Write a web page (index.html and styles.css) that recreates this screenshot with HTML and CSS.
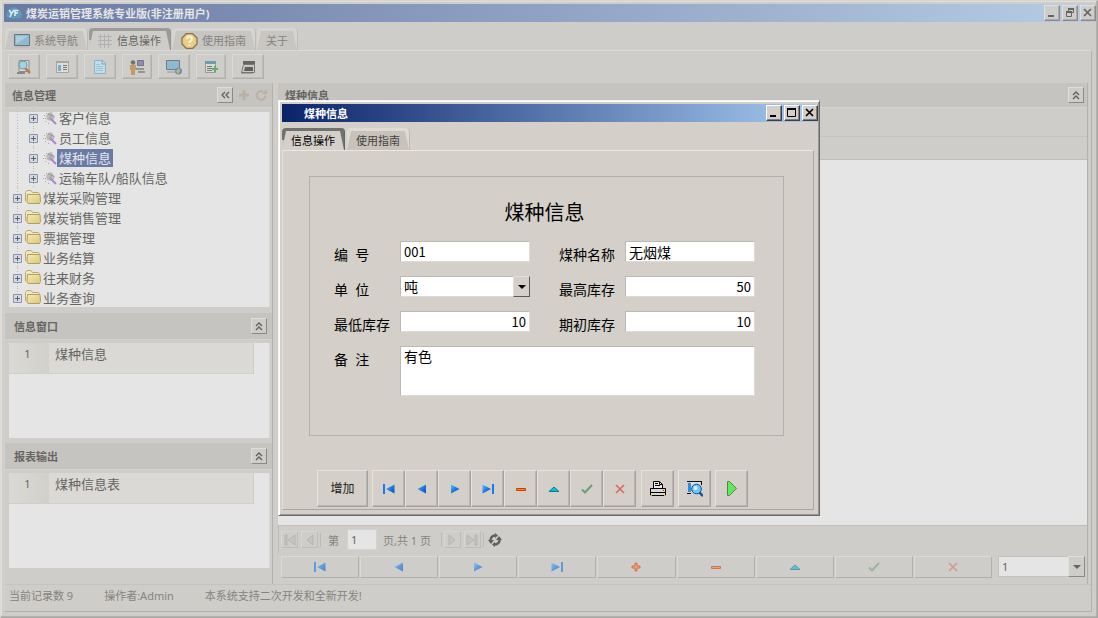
FILE: index.html
```html
<!DOCTYPE html>
<html lang="zh-CN">
<head>
    <meta charset="UTF-8">
    <meta name="viewport" content="width=device-width, initial-scale=1.0">
    <title>煤炭运销管理系统专业版(非注册用户)</title>
    <link rel="stylesheet" href="styles.css">
</head>
<body>
    <!-- Shared icons -->
    <svg class="sprite" aria-hidden="true">
        <defs>
            <linearGradient id="blue" x1="0" y1="0" x2="1" y2="1">
                <stop offset="0" stop-color="#5cc4ff"/>
                <stop offset=".5" stop-color="#1a7be8"/>
                <stop offset="1" stop-color="#0a4fb4"/>
            </linearGradient>
            <linearGradient id="folderFill" x1="0" y1="0" x2="1" y2="1">
                <stop offset="0" stop-color="#f0ebb4"/>
                <stop offset="1" stop-color="#dcc97c"/>
            </linearGradient>
        </defs>
        <symbol id="i-first" viewBox="0 0 12 10"><path d="M0 0h2v10H0z" fill="#1a7be8"/><path d="M11.500 .5v9L3 5z" fill="url(#blue)"/></symbol>
        <symbol id="i-prev" viewBox="0 0 12 10"><path d="M10 .5v9L1.500 5z" fill="url(#blue)"/></symbol>
        <symbol id="i-next" viewBox="0 0 12 10"><path d="M2 .5v9L10.500 5z" fill="url(#blue)"/></symbol>
        <symbol id="i-last" viewBox="0 0 12 10"><path d="M.5.5v9L9 5z" fill="url(#blue)"/><path d="M10 0h2v10h-2z" fill="#1a7be8"/></symbol>
        <symbol id="i-plus" viewBox="0 0 12 10"><path d="M5 1h2v3h3v2H7v3H5V6H2V4h3z" fill="#ff8a2a" stroke="#d23a00"/></symbol>
        <symbol id="i-minus" viewBox="0 0 12 10"><path d="M1.500 4.500h9v2h-9z" fill="#ff8a2a" stroke="#d23a00"/></symbol>
        <symbol id="i-up" viewBox="0 0 12 10"><path d="M1 7.500 6 3l5 4.500z" fill="#12bcd0" stroke="#007e98"/></symbol>
        <symbol id="i-check" viewBox="0 0 12 10"><path d="M1 5.500 4 8.500 11 1" fill="none" stroke="#6a9f78" stroke-width="2"/></symbol>
        <symbol id="i-cross" viewBox="0 0 12 10"><path d="M2 1l8 8M10 1 2 9" fill="none" stroke="#d5695f" stroke-width="1.600"/></symbol>
        <symbol id="i-collapse" viewBox="0 0 10 10"><path d="M2 5l3-3 3 3M2 9l3-3 3 3" fill="none" stroke="#5f5f5f" stroke-width="1.300"/></symbol>
        <symbol id="i-expand" viewBox="0 0 9 9"><path d="M.5.5h8v8h-8z" fill="#d5d9e2" stroke="#8b95ab"/><path d="M2 4.500h5M4.500 2v5" stroke="#5d6575"/></symbol>
        <symbol id="i-folder" viewBox="0 0 16 14"><path d="M.5 11V2.500L2 .5h4l1.500 2h6l1 1V11" fill="#efe8c6" stroke="#c2a768"/><path d="M2.500 4.500h12.500l.5 7-1 2H3l-1-1.500z" fill="url(#folderFill)" stroke="#b99c5c"/></symbol>
        <symbol id="i-tool" viewBox="0 0 14 14"><path d="M1 4.500h2M0 7.500h3M2 10.500h2M3 2.500h2M5 12.500h2" stroke="#a8a8a8" stroke-dasharray="1 1"/><path d="M3 5l2-3 4-1 1 3 2 1-1 3-3 2-4-1z" fill="#bdbdbd"/><path d="M5 3l4 1-3 4M9 4l2 2" fill="none" stroke="#959595"/><path d="M7.500 7.500 13 13" stroke="#b184d2" stroke-width="2"/></symbol>
        <symbol id="i-min" viewBox="0 0 12 12"><path d="M2 8h6v2H2z" fill="currentColor"/></symbol>
        <symbol id="i-max" viewBox="0 0 12 12"><path d="M1.500 1.500h8v8h-8z" fill="none" stroke="currentColor"/><path d="M1 1h9v2H1z" fill="currentColor"/></symbol>
        <symbol id="i-restore" viewBox="0 0 12 12"><path d="M4.500 4V1.500h5v4H7" fill="none" stroke="currentColor"/><path d="M4 1h6v2H4zM2 4h6v2H2z" fill="currentColor"/><path d="M2.500 5.500h5v4h-5z" fill="none" stroke="currentColor"/></symbol>
        <symbol id="i-close" viewBox="0 0 12 12"><path d="M2 2l7 7M9 2l-7 7" stroke="currentColor" stroke-width="1.700"/></symbol>
    </svg>

    <div class="app">
        <header class="titlebar">
            <svg class="logo" viewBox="0 0 16 14"><path d="M4 12.500a3.700 3.700 0 0 1-1.500-7A5.500 5.500 0 0 1 12.500 4a4.400 4.400 0 0 1 0 8.500z" fill="#5c9cb8"/><path d="M3 4l2.500 3.500L8 4M5.500 7.500 4 11M9 10V4.500h3.500M9 7h3" fill="none" stroke="#e6edf2" stroke-width="1.500"/></svg>
            <h1>煤炭运销管理系统专业版(非注册用户)</h1>
            <div class="win-buttons">
                <button type="button" aria-label="最小化"><svg><use href="#i-min"/></svg></button>
                <button type="button" aria-label="还原"><svg><use href="#i-restore"/></svg></button>
                <button type="button" aria-label="关闭"><svg><use href="#i-close"/></svg></button>
            </div>
        </header>

        <nav class="tabs">
            <button type="button" class="tab">
                <svg width="16" height="14" viewBox="0 0 16 14"><path d="M.5.5h15v11H.5z" fill="#8fb9cf" stroke="#6d7478"/><path d="M2 2h12L2 10z" fill="#a9cfe0"/><path d="M1 13h14" stroke="#b5b5b1"/></svg>
                <span>系统导航</span>
            </button>
            <button type="button" class="tab active">
                <svg width="15" height="14" viewBox="0 0 15 14"><path d="M2.500 0v14M6.500 0v14M10.500 0v14M0 2.500h14M0 6.500h14M0 10.500h14" stroke="#b2b2b4"/></svg>
                <span>信息操作</span>
            </button>
            <button type="button" class="tab">
                <svg width="17" height="16" viewBox="0 0 17 16"><path d="M5.500.5h6l4.500 4.500v6l-4.500 4.500h-6L1 11V5z" fill="#e8cf84" stroke="#8b6f51" stroke-width="1.300"/><path d="M6 6q0-2.500 2.500-2.500T11 6q0 1.500-2.500 3v1M8.500 11.500v1.500" fill="none" stroke="#f3efe1" stroke-width="2"/></svg>
                <span>使用指南</span>
            </button>
            <button type="button" class="tab">
                <span>关于</span>
            </button>
        </nav>

        <div class="frame">
            <div class="toolbar">
                <button type="button" aria-label="查询"><svg viewBox="0 0 16 16"><path d="M3 1.500h10v11H3z" fill="#d6d6d3" stroke="#8d8d8a"/><path d="M9 9l5 5" stroke="#c0775c" stroke-width="2.500"/><circle cx="7" cy="6" r="4" fill="#a5d3e4" stroke="#6c9db2"/><path d="M1 14h8" stroke="#888" stroke-width="2"/></svg></button>
                <button type="button" aria-label="明细"><svg viewBox="0 0 16 16"><path d="M2.500 2.500h12v11h-12z" fill="#dededb" stroke="#a5a5a2"/><path d="M2 2h13v2H2z" fill="#a6a6a4"/><path d="M4 6h3v6H4z" fill="#7badcf"/><path d="M9 6.500h4M9 8.500h4M9 10.500h4" stroke="#777"/></svg></button>
                <button type="button" aria-label="新建"><svg viewBox="0 0 16 16"><path d="M2.500 1.500h8l3 3v10h-11z" fill="#c4dce8" stroke="#89b4ca"/><path d="M10 1v4h4" fill="none" stroke="#78a8c0"/><path d="M4 5.500h4M4 7.500h7M4 9.500h7M4 11.500h7" stroke="#9fc4d6"/></svg></button>
                <button type="button" class="narrow" aria-label="用户"><svg viewBox="0 0 16 16"><circle cx="4" cy="3.500" r="2.300" fill="#77736c"/><path d="M1 6h6v5H6v5H2v-5H1z" fill="#c39b66"/><path d="M8.500 1.500h6v5h-6z" fill="#8f8ac6" stroke="#777"/><path d="M7 9h8v2H7zM9 12h7v2H9z" fill="#949494"/></svg></button>
                <button type="button" aria-label="网络"><svg viewBox="0 0 16 16"><path d="M.5 1.500h13v9H.5z" fill="#8fb9cf" stroke="#6d7d87"/><path d="M1 13h9" stroke="#999"/><circle cx="12.500" cy="12" r="3.500" fill="#6f8fc0"/><path d="M10 12l3-3 1 3-2 3z" fill="#c4b66e"/></svg></button>
                <button type="button" class="narrow" aria-label="导出"><svg viewBox="0 0 16 16"><path d="M2.500 2.500h10v11h-10z" fill="#d9d9d6" stroke="#999"/><path d="M2 2h11v3H2z" fill="#6f9cb0"/><path d="M4 7.500h5M4 9.500h5M4 11.500h5" stroke="#777"/><path d="M9 10h6M12 7v6" stroke="#68a96e" stroke-width="2"/></svg></button>
                <button type="button" aria-label="打印"><svg viewBox="0 0 16 16"><path d="M3 2h12v3H3z" fill="#656565"/><path d="M3.500 5.500h11v8h-13z" fill="#c9c9c5" stroke="#777"/><path d="M5 8h8v4H4z" fill="#5f5f5f"/><path d="M1 14h12" stroke="#777"/></svg></button>
            </div>

            <div class="workspace">
                <aside class="sidebar">
                    <div class="panel-head">
                        <h2>信息管理</h2>
                        <button type="button" class="head-button" aria-label="收起"><svg viewBox="0 0 10 10"><path d="M5 2 2 5l3 3M9 2 6 5l3 3" fill="none" stroke="#5f5f5f" stroke-width="1.300"/></svg></button>
                        <button type="button" class="plain-button" aria-label="添加"><svg viewBox="0 0 12 12"><path d="M6 1v10M1 6h10" stroke="#b9b1a3" stroke-width="3"/></svg></button>
                        <button type="button" class="plain-button" aria-label="刷新"><svg viewBox="0 0 12 12"><path d="M8 2.500a4.300 4.300 0 1 0 2.500 4" fill="none" stroke="#b9b1a3" stroke-width="2"/><path d="M7 5h5V0z" fill="#b9b1a3"/></svg></button>
                    </div>
                    <ul class="tree">
                        <li class="child"><button type="button" aria-label="展开"><svg><use href="#i-expand"/></svg></button><svg class="tool"><use href="#i-tool"/></svg><span>客户信息</span></li>
                        <li class="child"><button type="button" aria-label="展开"><svg><use href="#i-expand"/></svg></button><svg class="tool"><use href="#i-tool"/></svg><span>员工信息</span></li>
                        <li class="child selected"><button type="button" aria-label="展开"><svg><use href="#i-expand"/></svg></button><svg class="tool"><use href="#i-tool"/></svg><span>煤种信息</span></li>
                        <li class="child"><button type="button" aria-label="展开"><svg><use href="#i-expand"/></svg></button><svg class="tool"><use href="#i-tool"/></svg><span>运输车队/船队信息</span></li>
                        <li><button type="button" aria-label="展开"><svg><use href="#i-expand"/></svg></button><svg class="folder"><use href="#i-folder"/></svg><span>煤炭采购管理</span></li>
                        <li><button type="button" aria-label="展开"><svg><use href="#i-expand"/></svg></button><svg class="folder"><use href="#i-folder"/></svg><span>煤炭销售管理</span></li>
                        <li><button type="button" aria-label="展开"><svg><use href="#i-expand"/></svg></button><svg class="folder"><use href="#i-folder"/></svg><span>票据管理</span></li>
                        <li><button type="button" aria-label="展开"><svg><use href="#i-expand"/></svg></button><svg class="folder"><use href="#i-folder"/></svg><span>业务结算</span></li>
                        <li><button type="button" aria-label="展开"><svg><use href="#i-expand"/></svg></button><svg class="folder"><use href="#i-folder"/></svg><span>往来财务</span></li>
                        <li><button type="button" aria-label="展开"><svg><use href="#i-expand"/></svg></button><svg class="folder"><use href="#i-folder"/></svg><span>业务查询</span></li>
                    </ul>

                    <div class="panel-head tall">
                        <h2>信息窗口</h2>
                        <button type="button" class="head-button" aria-label="收起"><svg><use href="#i-collapse"/></svg></button>
                    </div>
                    <div class="list">
                        <div class="list-row"><span class="num">1</span><span class="name">煤种信息</span></div>
                    </div>

                    <div class="panel-head tall">
                        <h2>报表输出</h2>
                        <button type="button" class="head-button" aria-label="收起"><svg><use href="#i-collapse"/></svg></button>
                    </div>
                    <div class="list">
                        <div class="list-row"><span class="num">1</span><span class="name">煤种信息表</span></div>
                    </div>
                </aside>

                <main class="main">
                    <div class="panel-head">
                        <h2>煤种信息</h2>
                        <button type="button" class="head-button" aria-label="收起"><svg><use href="#i-collapse"/></svg></button>
                    </div>
                    <div class="filter-row"></div>
                    <div class="grid-head"></div>
                    <div class="grid-body"></div>

                    <div class="pager">
                        <button type="button" aria-label="首页"><svg viewBox="0 0 12 12"><path d="M1 1h2v10H1zM11 1v10L4 6z" fill="#c5c4c1" stroke="#aeadaa" stroke-width=".7"/></svg></button>
                        <button type="button" aria-label="上一页"><svg viewBox="0 0 12 12"><path d="M9 1v10L3 6z" fill="#c5c4c1" stroke="#aeadaa" stroke-width=".7"/></svg></button>
                        <i class="sep"></i>
                        <label for="page">第</label>
                        <input type="text" id="page" value="1">
                        <span>页,共 1 页</span>
                        <i class="sep"></i>
                        <button type="button" aria-label="下一页"><svg viewBox="0 0 12 12"><path d="M3 1v10l6-5z" fill="#c5c4c1" stroke="#aeadaa" stroke-width=".7"/></svg></button>
                        <button type="button" aria-label="末页"><svg viewBox="0 0 12 12"><path d="M1 1v10l7-5zM9 1h2v10H9z" fill="#c5c4c1" stroke="#aeadaa" stroke-width=".7"/></svg></button>
                        <i class="sep"></i>
                        <button type="button" class="refresh" aria-label="刷新"><svg viewBox="0 0 14 14"><path d="M8 2.500A4.700 4.700 0 0 0 2.500 8M6 11.500A4.700 4.700 0 0 0 11.500 6" fill="none" stroke="#606060" stroke-width="2.500"/><path d="M0 7h6l-3 4zM8 7h6l-3-4zM7 0v5l3-2.500zM7 9v5l-3-2.500z" fill="#606060"/></svg></button>
                    </div>

                    <div class="record-bar">
                        <div class="record-nav">
                            <button type="button" aria-label="首条"><svg><use href="#i-first"/></svg></button>
                            <button type="button" aria-label="上一条"><svg><use href="#i-prev"/></svg></button>
                            <button type="button" aria-label="下一条"><svg><use href="#i-next"/></svg></button>
                            <button type="button" aria-label="末条"><svg><use href="#i-last"/></svg></button>
                            <button type="button" aria-label="添加"><svg><use href="#i-plus"/></svg></button>
                            <button type="button" aria-label="删除"><svg><use href="#i-minus"/></svg></button>
                            <button type="button" aria-label="编辑"><svg><use href="#i-up"/></svg></button>
                            <button type="button" class="off" aria-label="保存"><svg><use href="#i-check"/></svg></button>
                            <button type="button" class="off" aria-label="取消"><svg><use href="#i-cross"/></svg></button>
                        </div>
                        <div class="combo">
                            <select aria-label="记录"><option>1</option></select>
                            <span class="arrow"></span>
                        </div>
                    </div>
                </main>
            </div>

            <footer class="status">
                <span>当前记录数 9</span>
                <span>操作者:Admin</span>
                <span>本系统支持二次开发和全新开发!</span>
            </footer>
        </div>
    </div>

    <div class="modal-layer">
        <section class="dialog" role="dialog" aria-labelledby="dialogTitle">
            <header class="titlebar">
                <h2 id="dialogTitle">煤种信息</h2>
                <div class="win-buttons">
                    <button type="button" aria-label="最小化"><svg><use href="#i-min"/></svg></button>
                    <button type="button" aria-label="最大化"><svg><use href="#i-max"/></svg></button>
                    <button type="button" aria-label="关闭"><svg><use href="#i-close"/></svg></button>
                </div>
            </header>
            <nav class="tabs">
                <button type="button" class="tab active"><span>信息操作</span></button>
                <button type="button" class="tab"><span>使用指南</span></button>
            </nav>
            <form class="dialog-page">
                <div class="form-box">
                    <h3>煤种信息</h3>
                    <div class="fields">
                        <label for="code">编  号</label>
                        <input type="text" id="code" class="digits" value="001">
                        <label for="coalName">煤种名称</label>
                        <input type="text" id="coalName" value="无烟煤">

                        <label for="unit">单  位</label>
                        <div class="combo">
                            <select id="unit"><option>吨</option></select>
                            <span class="arrow"></span>
                        </div>
                        <label for="maxStock">最高库存</label>
                        <input type="text" id="maxStock" class="digits right" value="50">

                        <label for="minStock">最低库存</label>
                        <input type="text" id="minStock" class="digits right" value="10">
                        <label for="initStock">期初库存</label>
                        <input type="text" id="initStock" class="digits right" value="10">

                        <label for="remark">备  注</label>
                        <textarea id="remark">有色</textarea>
                    </div>
                </div>

                <div class="form-nav">
                    <button type="button" class="add">增加</button>
                    <div class="group">
                        <button type="button" aria-label="首条"><svg><use href="#i-first"/></svg></button>
                        <button type="button" aria-label="上一条"><svg><use href="#i-prev"/></svg></button>
                        <button type="button" aria-label="下一条"><svg><use href="#i-next"/></svg></button>
                        <button type="button" aria-label="末条"><svg><use href="#i-last"/></svg></button>
                        <button type="button" aria-label="删除"><svg><use href="#i-minus"/></svg></button>
                        <button type="button" aria-label="编辑"><svg><use href="#i-up"/></svg></button>
                        <button type="button" aria-label="保存"><svg><use href="#i-check"/></svg></button>
                        <button type="button" aria-label="取消"><svg><use href="#i-cross"/></svg></button>
                    </div>
                    <button type="button" aria-label="打印"><svg class="big" viewBox="0 0 16 16"><path d="M3.500 7.500v-7h6l3 3v4" fill="#e9e9e4" stroke="#000"/><path d="M5 2.500h3M5 4.500h5M9.500 1v2.500h3" fill="none" stroke="#000"/><path d="M.5 7.500h15v7H.5z" fill="#d8d8d0" stroke="#000"/><path d="M1 11.500h14M2 7.500h12" stroke="#000"/><path d="M0 14h2v1H0zM14 14h2v1h-2z" fill="#c8b400"/><path d="M13 9h1v1h-1z" fill="#e00000"/></svg></button>
                    <button type="button" aria-label="预览"><svg class="big" viewBox="0 0 16 16"><path d="M0 .5h15M0 12.500h4M14.500 1v3" fill="none" stroke="#111"/><path d="M1 2h3v9H1z" fill="#2f8ed8"/><path d="M4 1h9v10H4z" fill="#dededb"/><path d="M12 11l4 4" stroke="#145ba4" stroke-width="2.500"/><circle cx="9.500" cy="8" r="4.800" fill="#72c4fa" stroke="#104e94"/><circle cx="8.500" cy="7" r="2" fill="#d5f1ff"/></svg></button>
                    <button type="button" aria-label="执行"><svg class="big" viewBox="0 0 16 16"><path d="M3.500 .5v14h2l7-7-7-7z" fill="#62e85c" stroke="#4d8a4a"/></svg></button>
                </div>
            </form>
        </section>
    </div>
</body>
</html>
```

FILE: styles.css
```css
:root {
    --bg: #cfcdc9;
    --head: #c6c4c0;
    --light: #dbd9d5;
    --line: #b3b1ad;
    --dark: #8b8a88;
    --field: #e5e5e5;
    --text: #666563;
    --muted: #858481;
}

* {
    box-sizing: border-box;
}

body {
    margin: 0;
    font-family: 'Noto Sans', 'Noto Sans CJK SC', sans-serif;
    font-size: 11px;
    line-height: 16px;
    color: var(--text);
    background: var(--bg);
}

h1, h2, h3, ul {
    margin: 0;
    padding: 0;
}

button, input, select, textarea {
    font: inherit;
    color: inherit;
    margin: 0;
    padding: 0;
    border-radius: 0;
}

button {
    display: flex;
    align-items: center;
    justify-content: center;
    background: var(--bg);
    border: 1px solid;
    border-color: var(--light) var(--line) var(--line) var(--light);
}

svg {
    display: block;
    flex: none;
}

.sprite {
    position: absolute;
    width: 0;
    height: 0;
}

.app {
    min-height: 100vh;
    display: flex;
    flex-direction: column;
    padding: 3px 1px 5px 3px;
    border: 1px solid;
    border-color: #d6d4d0 #a7a6a4 #a7a6a4 #dddbd7;
    box-shadow: inset -1px -1px #b4b2af, inset 1px 1px #e0dfdc;
}

/* Title bars */
.titlebar {
    display: flex;
    align-items: center;
    height: 18px;
    padding-left: 2px;
    background: linear-gradient(to right, #6b7aa4, #b6cce4);
}

.titlebar h1, .titlebar h2 {
    flex: 1;
    padding-top: 2px;
    font-size: 11px;
    font-weight: bold;
    color: #e6e6e6;
}

.logo {
    width: 16px;
    height: 14px;
    margin-right: 4px;
}

.win-buttons {
    display: flex;
    gap: 2px;
}

.win-buttons button {
    width: 16px;
    height: 16px;
    border-color: #e2e0dd var(--dark) var(--dark) #e2e0dd;
    box-shadow: inset -1px -1px #adaba8;
}

.win-buttons svg {
    width: 12px;
    height: 12px;
}

/* Tabs */
.tabs {
    display: flex;
    gap: 1px;
    height: 22px;
    margin: 6px 0 0 1px;
}

.tab {
    position: relative;
    gap: 4px;
    padding: 3px 9px 0;
    color: var(--muted);
    background: #d7d5d1;
    border: 0;
    border-right: 1px solid #bdbbb7;
    border-radius: 4px 4px 0 0;
}

.tab::before {
    content: "";
    position: absolute;
    inset: 3px 0 0;
    background: #c8c6c2;
    clip-path: polygon(4px 0, calc(100% - 4px) 0, 100% 100%, 0 100%);
}

.tab > * {
    position: relative;
}

.tab.active {
    color: var(--text);
    background: linear-gradient(to right, var(--bg), transparent 8px) 0 12px no-repeat, #9c9b98;
    border-right-color: #969592;
}

.tab.active::before {
    background: var(--bg);
}

.frame {
    flex: 1;
    display: flex;
    flex-direction: column;
    margin-right: 4px;
    border: 1px solid;
    border-color: #dcdad6 var(--line) var(--line) #d5d3cf;
}

.toolbar {
    display: flex;
    gap: 6px;
    padding: 3px 3px 4px;
}

.toolbar button {
    width: 32px;
    height: 25px;
    box-shadow: inset -1px -1px #bfbdb9;
}

.toolbar .narrow {
    width: 30px;
}

.toolbar svg {
    width: 16px;
    height: 16px;
}

.workspace {
    flex: 1;
    display: flex;
    gap: 5px;
    padding-right: 3px;
}

/* Panel headers */
.panel-head {
    display: flex;
    align-items: center;
    height: 25px;
    padding: 0 3px 0 7px;
    background: var(--head);
    border-bottom: 1px solid #d4d2ce;
}

.panel-head.tall {
    height: 27px;
    margin: 6px 0 3px;
    padding-left: 9px;
}

.panel-head h2 {
    flex: 1;
    padding-top: 2px;
    font-size: 11px;
    font-weight: bold;
}

.head-button {
    width: 16px;
    height: 16px;
    border-color: #e0dedb var(--dark) var(--dark) #e0dedb;
}

.head-button svg {
    width: 10px;
    height: 10px;
}

.plain-button {
    width: 12px;
    height: 16px;
    margin-left: 5px;
    background: none;
    border: 0;
}

.plain-button svg {
    width: 12px;
    height: 12px;
}

/* Sidebar */
.sidebar {
    width: 268px;
    display: flex;
    flex-direction: column;
    padding-bottom: 16px;
    border-right: 1px solid var(--line);
}

.sidebar .panel-head {
    padding-right: 5px;
}

.tree {
    display: flow-root;
    height: 195px;
    margin: 4px 2px 0 4px;
    list-style: none;
    background: var(--field);
    border-right: 1px solid #d8d7d5;
}

.tree li {
    display: flex;
    align-items: center;
    height: 20px;
    padding-left: 4px;
    font-size: 13px;
    line-height: 18px;
    background: repeating-linear-gradient(#b9b9b9 0 1px, transparent 1px 3px) 8px 0 / 1px 100% no-repeat;
}

/* The list is scrolled a little past its first row */
.tree li:first-child {
    margin-top: -4px;
}

.tree li:last-child {
    background-size: 1px 10px;
}

.tree .child {
    padding-left: 20px;
    background:
        repeating-linear-gradient(#b9b9b9 0 1px, transparent 1px 3px) 8px 0 / 1px 100% no-repeat,
        repeating-linear-gradient(#b9b9b9 0 1px, transparent 1px 3px) 24px 0 / 1px 100% no-repeat;
}

.tree button {
    border: 0;
    background: none;
}

.tree button svg {
    width: 9px;
    height: 9px;
}

.tree .folder {
    width: 16px;
    height: 14px;
    margin: 0 0 2px 3px;
}

.tree .tool {
    width: 14px;
    height: 14px;
    margin-left: 5px;
}

.tree span {
    padding: 0 2px;
}

.tree .selected span {
    color: #e3e6ee;
    background: #6b7aa4;
}

.list {
    flex: 1;
    margin: 0 2px 0 4px;
    background: var(--field);
    border-right: 1px solid #d8d7d5;
}

.list + .panel-head {
    margin-top: 5px;
}

.list-row {
    display: flex;
    height: 31px;
    margin-right: 15px;
    line-height: 22px;
    background: #dad9d5;
    border-right: 1px solid #cfcecb;
    border-bottom: 1px solid #d0cfcc;
}

.num {
    width: 40px;
    padding-right: 3px;
    text-align: center;
    background: linear-gradient(to right, #dad9d5, #d1d0cb);
}

.name {
    padding-left: 6px;
    font-size: 13px;
}

/* Main grid */
.main {
    flex: 1;
    display: flex;
    flex-direction: column;
    border-right: 1px solid var(--line);
}

.filter-row {
    height: 28px;
}

.grid-head {
    height: 24px;
    border-top: 1px solid #c6c4c1;
    border-bottom: 1px solid #bfbdba;
}

.grid-body {
    flex: 1;
    background: var(--field);
}

.pager {
    display: flex;
    align-items: center;
    height: 28px;
    padding: 0 2px;
    color: var(--muted);
    border-top: 1px solid #c0bebb;
    border-left: 1px solid #bebcb9;
}

.pager button {
    width: 17px;
    height: 17px;
    border-color: #d8d6d2 #bfbdba #bfbdba #d8d6d2;
}

.pager button + button {
    margin-left: 3px;
}

.pager button svg {
    width: 12px;
    height: 12px;
}

.pager .sep {
    width: 1px;
    height: 14px;
    margin: 0 2px;
    background: #bebcb9;
}

.pager label {
    margin: 0 8px 0 5px;
    padding-top: 2px;
}

.pager input {
    width: 30px;
    height: 21px;
    margin-right: 6px;
    padding-left: 3px;
    color: var(--text);
    background: var(--field);
    border: 1px solid #d4d3d0;
}

.pager span {
    margin-right: 8px;
    padding-top: 2px;
}

.pager .refresh {
    margin-left: 1px;
    background: none;
    border: 0;
}

.pager .refresh svg {
    width: 14px;
    height: 14px;
}

.record-bar {
    display: flex;
    gap: 6px;
    padding: 3px 2px 6px 3px;
}

.record-nav {
    flex: 1;
    display: flex;
    gap: 1px;
}

.record-nav button {
    flex: 1;
    height: 22px;
}

.record-nav svg, .group svg {
    width: 12px;
    height: 10px;
}

.record-nav svg {
    opacity: 0.6;
}

.record-nav .off svg {
    opacity: 0.5;
}

/* Drop-down with a raised arrow button */
.combo {
    position: relative;
    width: 87px;
    height: 21px;
}

.combo select {
    appearance: none;
    display: block;
    width: 100%;
    height: 100%;
    padding: 0 18px 0 3px;
    background: var(--field);
    border: 1px solid #c3c2bf;
}

.combo .arrow {
    position: absolute;
    top: 0;
    right: 0;
    width: 17px;
    height: 100%;
    background: var(--bg);
    border: 1px solid;
    border-color: #e0dedb var(--dark) var(--dark) #e0dedb;
    pointer-events: none;
}

.combo .arrow::after {
    content: "";
    position: absolute;
    top: 8px;
    left: 4px;
    border: 4px solid transparent;
    border-top-color: currentColor;
    border-bottom: 0;
}

.status {
    display: flex;
    gap: 31px;
    height: 27px;
    padding: 3px 4px 0;
    color: var(--muted);
    border-top: 1px solid #c5c3bf;
}

/* Dialog */
.modal-layer {
    position: fixed;
    inset: 0;
    display: flex;
    align-items: center;
    justify-content: center;
    padding-bottom: 2px;
}

.dialog {
    --bg: #d4cfc8;
    --light: #e6e3de;
    --line: #a5a29d;
    --dark: #5c5a58;
    --text: #000;
    --muted: #44423f;
    width: 542px;
    padding: 3px 1px 5px 3px;
    color: var(--text);
    background: var(--bg);
    border: 1px solid;
    border-color: #f4f3f1 #6c6b69 #6c6b69 #f4f3f1;
    box-shadow: inset 1px 1px #fff, inset -1px -1px #99979a;
}

.dialog .titlebar {
    padding-left: 22px;
    background: linear-gradient(to right, #0a246a, #a6caf0);
}

.dialog .titlebar h2 {
    color: #fff;
}

.dialog .win-buttons button {
    border-color: #fff #404040 #404040 #fff;
    box-shadow: inset -1px -1px #808080;
}

.dialog .tabs {
    gap: 2px;
    margin-left: 0;
}

.dialog .tab {
    background: #dedbd5;
}

.dialog .tab::before {
    background: #c8c2ba;
}

.dialog .tab.active {
    background: linear-gradient(to right, var(--bg), transparent 8px) 0 12px no-repeat, #71716f;
    border-right-color: #666;
}

.dialog .tab.active::before {
    background: var(--bg);
}

.dialog-page {
    margin-right: 4px;
    padding: 25px 29px 2px 26px;
    border: 1px solid;
    border-color: #ebe8e4 #aaa6a1 #aaa6a1 #e0ddd8;
}

.form-box {
    height: 260px;
    padding: 20px 28px 0 24px;
    border: 1px solid #b3afaa;
}

.form-box h3 {
    font-size: 20px;
    font-weight: normal;
    line-height: 32px;
    text-align: center;
}

.fields {
    display: grid;
    grid-template-columns: 66px 1fr 66px 130px;
    grid-auto-rows: minmax(21px, auto);
    row-gap: 14px;
    margin-top: 12px;
    font-size: 14px;
    line-height: 20px;
}

.fields label {
    height: 20px;
    padding-top: 4px;
    white-space: pre;
}

.fields input, .fields textarea, .fields select {
    width: 130px;
    height: 21px;
    padding: 0 3px;
    color: #000;
    background: #fff;
    border: 1px solid;
    border-color: #bcb8b3 #dedbd6 #dedbd6 #bcb8b3;
}

.fields .digits {
    font-family: 'Noto Sans CJK SC', sans-serif;
    font-size: 13px;
}

.fields .right {
    text-align: right;
}

.fields .combo {
    width: 130px;
}

.fields textarea {
    grid-column: 2 / -1;
    width: 100%;
    height: 50px;
    resize: none;
}

.form-nav {
    display: flex;
    gap: 4px;
    margin-top: 34px;
    padding-left: 8px;
}

.form-nav button {
    width: 33px;
    height: 37px;
    box-shadow: inset -1px -1px #b9b5af;
}

.form-nav .add {
    width: 51px;
    font-size: 12px;
    color: #222;
}

.group {
    display: flex;
    margin-right: 1px;
}

.form-nav .big {
    width: 16px;
    height: 16px;
}
```
